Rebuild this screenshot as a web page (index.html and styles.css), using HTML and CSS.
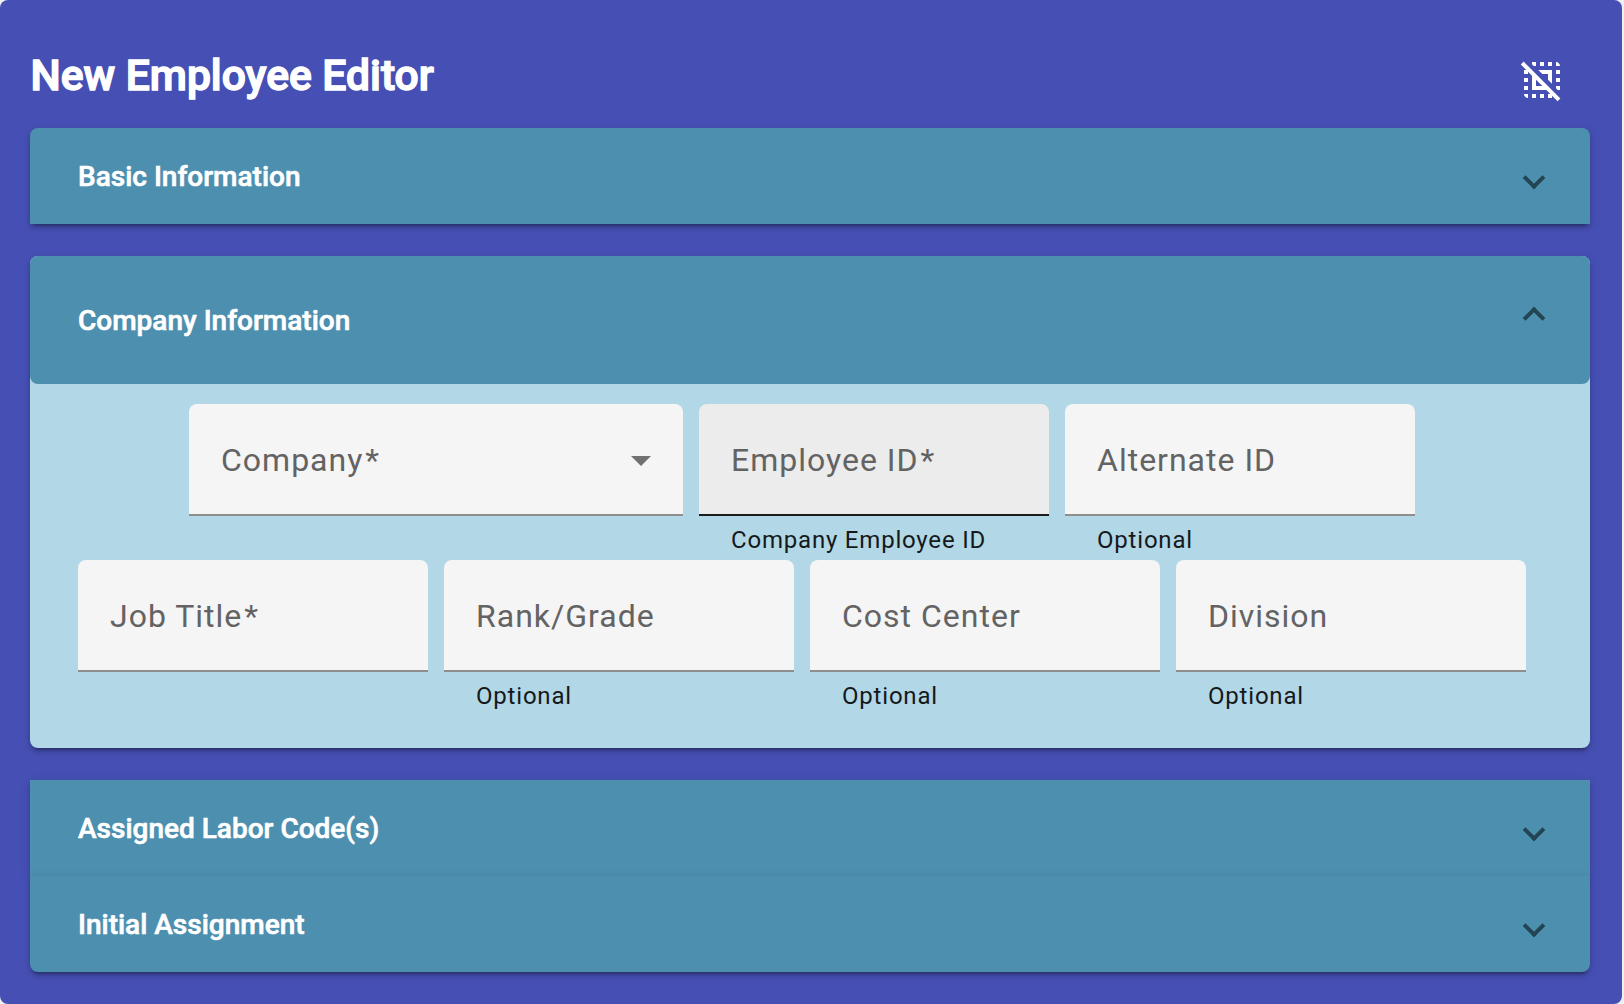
FILE: index.html
```html
<!DOCTYPE html>
<html lang="en">
<head>
<meta charset="utf-8">
<title>New Employee Editor</title>
<link rel="stylesheet" href="styles.css">
</head>
<body>
<main class="editor">
  <header class="editor-header">
    <h1 class="editor-title">New Employee Editor</h1>
    <svg class="deselect-icon" viewBox="0 0 24 24" aria-hidden="true"><path d="M3,13h2v-2H3V13z M7,21h2v-2H7V21z M13,3h-2v2h2V3z M19,3v2h2C21,3.9,20.1,3,19,3z M5,21v-2H3C3,20.1,3.9,21,5,21z M3,17h2v-2H3V17z M11,21h2v-2h-2V21z M19,13h2v-2h-2V13z M19,9h2V7h-2V9z M15,5h2V3h-2V5z M7.83,5L7,4.17V3h2v2H7.83z M19.83,17L19,16.17V15h2v2H19.83z M21.19,21.19L2.81,2.81L1.39,4.22L4.17,7H3v2h2V7.83l2,2V17h7.17l2,2H15v2h2v-1.17l2.78,2.78L21.19,21.19z M9,15v-3.17L12.17,15H9z M12.17,9l-2-2H17v6.83l-2-2V9H12.17z"/></svg>
  </header>

  <section class="panel panel-first">
    <div class="panel-header"><h2 class="panel-title">Basic Information</h2><span class="chevron"></span></div>
  </section>

  <section class="panel panel-open">
    <div class="panel-header"><h2 class="panel-title">Company Information</h2><span class="chevron chevron-up"></span></div>
    <div class="panel-body">
      <div class="field-row">
        <div class="field field-wide">
          <div class="field-box"><span class="field-label">Company<span class="required">*</span></span><svg class="select-arrow" viewBox="0 0 20 10" aria-hidden="true"><path d="M0 0h20L10 10z"/></svg></div>
        </div>
        <div class="field">
          <div class="field-box field-hover"><span class="field-label">Employee ID<span class="required">*</span></span></div>
          <div class="field-hint">Company Employee ID</div>
        </div>
        <div class="field">
          <div class="field-box"><span class="field-label">Alternate ID</span></div>
          <div class="field-hint">Optional</div>
        </div>
      </div>
      <div class="field-row">
        <div class="field">
          <div class="field-box"><span class="field-label">Job Title<span class="required">*</span></span></div>
        </div>
        <div class="field">
          <div class="field-box"><span class="field-label">Rank/Grade</span></div>
          <div class="field-hint">Optional</div>
        </div>
        <div class="field">
          <div class="field-box"><span class="field-label">Cost Center</span></div>
          <div class="field-hint">Optional</div>
        </div>
        <div class="field">
          <div class="field-box"><span class="field-label">Division</span></div>
          <div class="field-hint">Optional</div>
        </div>
      </div>
    </div>
  </section>

  <section class="panel">
    <div class="panel-header"><h2 class="panel-title">Assigned Labor Code(s)</h2><span class="chevron"></span></div>
  </section>
  <section class="panel panel-last">
    <div class="panel-header"><h2 class="panel-title">Initial Assignment</h2><span class="chevron"></span></div>
  </section>
</main>
</body>
</html>
```
FILE: styles.css
```css
* {
  box-sizing: border-box;
}

body {
  margin: 0;
  background: #f0f0f0;
  font-family: Roboto, sans-serif;
}

.editor {
  width: 1622px;
  height: 1004px;
  padding: 0 32px 32px 30px;
  border-radius: 8px;
  background: #4650b4;
}

.editor-header {
  display: flex;
  justify-content: space-between;
  align-items: flex-start;
  height: 128px;
  padding: 48px 24px 0 0;
}

.editor-title {
  margin: -1px 0 0 0.5px;
  color: #fff;
  font-size: 42.6px;
  font-weight: 500;
  line-height: 56px;
  -webkit-text-stroke: 1.4px #fff;
}

.deselect-icon {
  width: 48px;
  height: 48px;
  margin-top: 8px;
  fill: #fff;
}

.panel {
  background: #4d8faf;
  box-shadow: 0 6px 2px -4px rgba(0, 0, 0, 0.2), 0 4px 4px 0 rgba(0, 0, 0, 0.14), 0 2px 10px 0 rgba(0, 0, 0, 0.12);
}

.panel-first {
  border-radius: 8px 8px 0 0;
}

.panel-last {
  border-radius: 0 0 8px 8px;
}

.panel-open {
  height: 492px;
  margin: 32px 0;
  border-radius: 8px;
  background: #b2d7e6;
}

.panel-header {
  display: flex;
  justify-content: space-between;
  align-items: center;
  height: 96px;
  padding: 0 48px;
}

.panel-open .panel-header {
  height: 128px;
  border-radius: 8px;
  background: #4d8faf;
}

.panel-title {
  margin: 1px 0 0;
  color: #fff;
  font-size: 28px;
  font-weight: 500;
  line-height: 40px;
  -webkit-text-stroke: 0.6px #fff;
}

.chevron {
  width: 16px;
  height: 16px;
  margin-top: 3px;
  border: solid #234553;
  border-width: 0 4px 4px 0;
  transform: rotate(45deg);
}

.chevron-up {
  margin: 0 0 4px;
  transform: rotate(225deg);
}

.panel-body {
  padding: 20px 48px 0;
}

.field-row {
  display: flex;
  justify-content: center;
  height: 156px;
}

.field {
  width: 350px;
  margin-right: 16px;
}

.field-wide {
  width: 494px;
}

.field-box {
  display: flex;
  justify-content: space-between;
  align-items: center;
  height: 112px;
  padding: 2px 32px 0;
  border-bottom: 2px solid #8e8e8e;
  border-radius: 8px 8px 0 0;
  background: #f5f5f5;
}

.field-hover {
  border-bottom-color: #1a1d1e;
  background: #ececec;
}

.field-label {
  color: #636363;
  font-size: 32px;
  line-height: 48px;
  letter-spacing: 1px;
}

.required {
  margin-left: 2px;
}

.select-arrow {
  width: 20px;
  height: 10px;
  margin-top: 1px;
  fill: #717171;
}

.field-hint {
  padding: 4px 32px 0;
  color: #15191b;
  font-size: 24px;
  line-height: 40px;
  letter-spacing: 0.8px;
}
```
